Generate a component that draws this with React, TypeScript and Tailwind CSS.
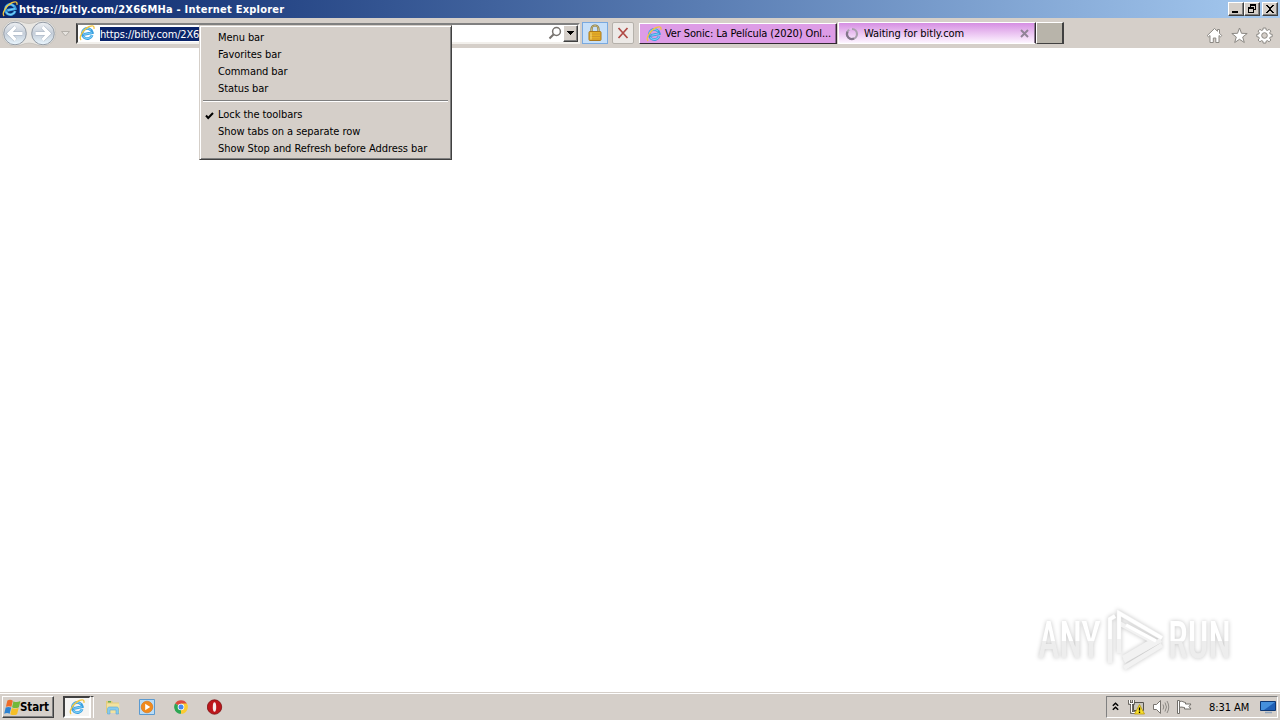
import type { ReactNode } from "react";
import clsx from "clsx";

const topItems = ["Menu bar", "Favorites bar", "Command bar", "Status bar"];

const bottomItems = [
  { label: "Lock the toolbars", checked: true },
  { label: "Show tabs on a separate row", checked: false },
  { label: "Show Stop and Refresh before Address bar", checked: false },
];

function IeIcon({ className }: { className?: string }) {
  return (
    <svg viewBox="0 0 16 16" className={clsx("shrink-0", className)}>
      <g transform="rotate(-12 8 8)">
        <path
          d="M12.6 11.2A5.100 5.100 0 1 1 13.300 8.700H5"
          fill="none"
          stroke="#3a9fe0"
          strokeWidth="2.700"
        />
        <path
          d="M12.600 11.200A5.100 5.100 0 0 1 3.600 10.500M3.500 6.700a5 5 0 0 1 8.900-.7M5.500 8.700h7.500"
          fill="none"
          stroke="#7ed2f8"
          strokeWidth="1"
        />
      </g>
      <path
        d="M2.200 14.800C-.8 13.300 3.800 4.600 10 1.700 13.600 0 15.600.8 14.900 3.800"
        fill="none"
        stroke="#f3c53c"
        strokeWidth="1.300"
      />
    </svg>
  );
}

function CaptionButton({ children }: { children: ReactNode }) {
  return (
    <button className="flex h-[14px] w-4 items-center justify-center border border-t-white border-r-[#404040] border-b-[#404040] border-l-white bg-[#d5cfc9] shadow-[inset_-1px_-1px_0_#808080]">
      <svg
        width="12"
        height="12"
        viewBox="0 0 12 12"
        shapeRendering="crispEdges"
        className="shrink-0"
      >
        {children}
      </svg>
    </button>
  );
}

function TitleBar() {
  return (
    <header className="flex h-[18px] items-center bg-linear-to-r from-[#0a246a] to-[#a6caf0] pr-[2px] pl-[2px]">
      <IeIcon className="size-4" />
      <h1 className="ml-px flex-1 pt-px text-[11px] leading-[17px] font-bold tracking-[0.23px] whitespace-nowrap text-white">
        https://bitly.com/2X66MHa - Internet Explorer
      </h1>
      <div className="flex">
        <CaptionButton>
          <path d="M2 8h6v2H2z" />
        </CaptionButton>
        <CaptionButton>
          <path d="M4 1h6v6H8V6h1V3H5v1H4zM2 4h6v6H2zM3 6v3h4V6z" fillRule="evenodd" />
        </CaptionButton>
        <div className="w-[2px]" />
        <CaptionButton>
          <path d="M2 2h2v1h1v1h2V3h1V2h2v1H9v1H8v1H7v2h1v1h1v1h1v1H8V9H7V8H5v1H4v1H2V9h1V8h1V7h1V5H4V4H3V3H2z" />
        </CaptionButton>
      </div>
    </header>
  );
}

function NavButtons() {
  return (
    <svg width="72" height="30" viewBox="0 0 72 30" className="shrink-0">
      <defs>
        <linearGradient id="nav" x1="0" y1="0" x2="0" y2="1">
          <stop offset="0" stopColor="#eef0f3" />
          <stop offset=".5" stopColor="#c5ced9" />
          <stop offset="1" stopColor="#eaf7ff" />
        </linearGradient>
      </defs>
      <path
        d="M15 2.500c6 0 8 3 14 3s8-3 14-3a12.800 12.800 0 0 1 0 25.600c-6 0-8-3-14-3s-8 3-14 3A12.800 12.800 0 0 1 15 2.500z"
        fill="#e8e6e2"
        stroke="#c3bfb9"
        strokeWidth=".8"
      />
      <circle cx="15" cy="15.500" r="11.300" fill="url(#nav)" stroke="#939ba5" />
      <circle cx="43" cy="15.500" r="11.300" fill="url(#nav)" stroke="#939ba5" />
      <path
        d="M22.500 15.500H9M15.500 9l-6.500 6.500 6.500 6.500M35.500 15.500H49M42.500 9l6.500 6.500-6.500 6.500"
        fill="none"
        stroke="#a5b2c1"
        strokeWidth="4.200"
      />
      <path
        d="M22.500 15.500H9M15.500 9l-6.500 6.500 6.500 6.500M35.500 15.500H49M42.500 9l6.500 6.500-6.500 6.500"
        fill="none"
        stroke="#fff"
        strokeWidth="3.200"
      />
      <path d="M61.500 13.500h8l-4 4.500z" fill="#e6e3df" stroke="#b3afa9" />
    </svg>
  );
}

function AddressBar() {
  return (
    <div className="ml-1 flex h-[21px] w-[504px] shrink-0 items-center border-2 border-t-[#808080] border-r-[#f2f0ec] border-b-[#f2f0ec] border-l-[#404040] bg-white">
      <IeIcon className="ml-px size-4" />
      <div className="ml-[5px] flex-1">
        <span className="inline-block h-[14px] bg-[#0a246a] pt-px align-middle text-[11px] leading-[13px] tracking-[-0.15px] whitespace-nowrap text-white">
          https://bitly.com/2X66MHa
        </span>
      </div>
      <svg width="14" height="14" viewBox="0 0 14 14" className="mr-px">
        <circle cx="8.500" cy="5.500" r="3.900" fill="none" stroke="#77736f" strokeWidth="1.500" />
        <path d="M5.700 8.300 1.500 12.500" stroke="#77736f" strokeWidth="2" />
      </svg>
      <button className="flex h-[17px] w-[15px] items-center justify-center border border-t-white border-r-[#404040] border-b-[#404040] border-l-white bg-[#d5cfc9] shadow-[inset_-1px_-1px_0_#808080]">
        <svg width="7" height="4" viewBox="0 0 7 4" shapeRendering="crispEdges">
          <path d="M0 0h7v1H6v1H5v1H4v1H3V3H2V2H1V1H0z" />
        </svg>
      </button>
    </div>
  );
}

function LockIcon() {
  return (
    <svg width="16" height="18" viewBox="0 0 16 18">
      <path d="M4.500 9V5a3.500 3.500 0 0 1 7 0v4" fill="none" stroke="#86763f" strokeWidth="2.200" />
      <path d="M4.500 9V5a3.500 3.500 0 0 1 7 0v4" fill="none" stroke="#d9c988" strokeWidth=".8" />
      <rect x="2" y="7.500" width="12" height="9" rx="1" fill="#e5ae24" stroke="#a9771c" />
      <path d="M3 10h10M3 12.500h10M3 15h10" stroke="#d0962a" />
      <path d="M4 8.500v7" stroke="#f7dc7c" />
    </svg>
  );
}

function Tabs() {
  return (
    <div className="ml-[5px] flex h-[22px] shrink-0 items-stretch">
      <div className="mt-px flex h-[21px] w-[198px] items-center border border-t-white border-r-[#302830] border-b-[#302830] border-l-white bg-[#dd9ce6] pl-[6px] shadow-[inset_-1px_0_0_#8f6a95]">
        <IeIcon className="size-4" />
        <span className="ml-[3px] pt-px text-[11px] leading-4 tracking-[-0.12px] whitespace-nowrap">
          Ver Sonic: La Película (2020) Onl...
        </span>
      </div>
      <div className="ml-px flex w-[198px] items-center border border-t-white border-r-[#302830] border-b-white border-l-white bg-linear-to-b from-[#d58ee2] to-[#fdf5ff] pt-px pl-[6px] shadow-[inset_-1px_0_0_#8f7a93]">
        <svg width="14" height="14" viewBox="0 0 14 14">
          <circle cx="7" cy="7" r="5" fill="none" stroke="#a9a0ae" strokeWidth="2.200" />
          <path d="M2.500 4.800A5 5 0 0 0 9 11.600" fill="none" stroke="#82748a" strokeWidth="2.200" />
          <path d="M4.300 2.800A5 5 0 0 1 7 2" fill="none" stroke="#e5b9ef" strokeWidth="2.400" />
        </svg>
        <span className="ml-[5px] flex-1 pt-px text-[11px] leading-4 tracking-[-0.05px] whitespace-nowrap">
          Waiting for bitly.com
        </span>
        <svg width="9" height="9" viewBox="0 0 9 9" className="mr-[6px]">
          <path d="m1 1 7 7M8 1 1 8" stroke="#918397" strokeWidth="2" />
        </svg>
      </div>
      <div className="h-[22px] w-[28px] border border-t-white border-r-2 border-r-[#404040] border-b-[#404040] border-l-white bg-[#b8b4aa]" />
    </div>
  );
}

function ToolIcons() {
  return (
    <div className="mt-[4px] mr-[7px] ml-auto flex items-center gap-2">
      <svg width="17" height="17" viewBox="0 0 17 17" fill="#fff" stroke="#8b8883">
        <path d="M8.500 1.500 1.200 8.600l1.300 1.200L4 8.500v7h3.300V11h2.500v4.500H13v-7l1.500 1.300 1.300-1.200-2.300-2.300V2.500h-2v1.800z" />
      </svg>
      <svg width="17" height="17" viewBox="0 0 17 17" fill="#fff" stroke="#8b8883">
        <path d="m8.500 1 2 5.300 5.700.2-4.500 3.500 1.600 5.500-4.800-3.200-4.800 3.200L5.300 10 .8 6.500l5.700-.2z" />
      </svg>
      <svg width="17" height="17" viewBox="0 0 17 17" fill="#fff" stroke="#8b8883">
        <path
          fillRule="evenodd"
          d="M7.200 1h2.600l.4 2 1.200.5 1.700-1.200 1.800 1.800-1.200 1.700.5 1.200 2 .4v2.300l-2 .4-.5 1.200 1.200 1.700-1.800 1.800-1.700-1.200-1.200.5-.4 2H7.200l-.4-2-1.200-.5-1.700 1.200L2.100 13l1.200-1.700-.5-1.200-2-.4V7.400l2-.4.500-1.200-1.200-1.700 1.800-1.800 1.700 1.200L6.800 3zM8.500 5.700a2.800 2.800 0 1 0 0 5.600 2.800 2.800 0 0 0 0-5.600z"
        />
      </svg>
    </div>
  );
}

function Toolbar() {
  return (
    <div className="flex h-[30px] items-center bg-[#d5cfc9]">
      <NavButtons />
      <AddressBar />
      <button className="ml-[2px] flex h-[22px] w-[26px] shrink-0 items-center justify-center border border-[#79a9df] bg-[#c6dff8]">
        <LockIcon />
      </button>
      <button className="ml-1 flex h-[22px] w-[22px] shrink-0 items-center justify-center rounded-[2px] border border-[#b5b1ab] bg-[#ece9e6]">
        <svg width="12" height="12" viewBox="0 0 12 12">
          <path d="m1.500 1 9 10M10.500 1l-9 10" stroke="#b04a45" strokeWidth="1.700" />
        </svg>
      </button>
      <Tabs />
      <ToolIcons />
    </div>
  );
}

function ContextMenu() {
  return (
    <div className="absolute top-[25px] left-[199px] h-[135px] w-[253px] border border-t-[#d5cfc9] border-r-[#404040] border-b-[#404040] border-l-[#d5cfc9] bg-[#d5cfc9] px-[2px] pt-[3px] text-[11px] leading-[17px] shadow-[inset_1px_1px_0_#fff,inset_-1px_-1px_0_#808080]">
      {topItems.map((label) => (
        <div key={label} className="h-[17px] pl-4 tracking-[-0.08px] whitespace-nowrap">
          {label}
        </div>
      ))}
      <div className="mx-px mt-[3px] mb-1 h-[2px] border-t border-b border-t-[#808080] border-b-white" />
      {bottomItems.map(({ label, checked }) => (
        <div key={label} className="flex h-[17px] items-center tracking-[-0.06px] whitespace-nowrap">
          <span className="w-4 pl-[3px]">
            {checked && (
              <svg width="9" height="9" viewBox="0 0 9 9" className="mt-px">
                <path d="M1 4.500 3.200 7 8 2" fill="none" stroke="#000" strokeWidth="2" />
              </svg>
            )}
          </span>
          {label}
        </div>
      ))}
    </div>
  );
}

function Watermark() {
  const word =
    "absolute top-[12px] origin-left scale-x-[0.7] bg-linear-to-b from-white from-50% to-[#ededed] to-50% bg-clip-text font-[Roboto] text-[52px] leading-[40px] font-medium text-transparent";
  return (
    <div className="absolute top-[609px] left-[1038px] h-[62px] w-[196px] drop-shadow-[0_0_2px_#c4c4c4]">
      <span className={clsx(word, "left-0")}>ANY</span>
      <svg width="60" height="62" viewBox="0 0 60 62" className="absolute left-[68px]">
        <path
          d="M4 54V10l5-3M13 44V4l43 25M18 52l37-21M18 59l38-23M13 43V14l33 18-29 17"
          fill="none"
          stroke="#f2f2f2"
          strokeWidth="4.500"
        />
        <path d="M4 30V10l5-3M13 30V4l43 25M20 16l30 16" fill="none" stroke="#fff" strokeWidth="3.500" />
      </svg>
      <span className={clsx(word, "left-[130px]")}>RUN</span>
    </div>
  );
}

function WindowsFlag() {
  return (
    <svg width="17" height="17" viewBox="0 0 16 16" className="shrink-0">
      <path d="M3.200 1.500C5 .4 6.900.7 8.300 1.600L7 7.400C5.400 6.500 3.700 6.500 1.800 7.400z" fill="#ee6b28" />
      <path d="M8.900 2c1.800 1.100 3.900 1.100 6.600-.1L14 7.700c-2.200 1.100-4.500 1.100-6.400 0z" fill="#72b83a" />
      <path d="M1.600 8.100c1.800-.9 3.500-.9 5.200 0L5.300 13.900c-1.600-.9-3.200-.9-5.100 0z" fill="#2d82d1" />
      <path d="M7.400 8.400c1.900 1 4 1 6.400 0L12.300 14.300c-2.200 1.100-4.400 1.100-6.400 0z" fill="#f6bf25" />
    </svg>
  );
}

function ExplorerIcon() {
  return (
    <svg width="16" height="16" viewBox="0 0 16 16">
      <path d="M1 2h6l1 1.500h6V14H1z" fill="#e3cc7c" />
      <path d="M2 4.500h12l1 9.500H2z" fill="#f3e29f" />
      <path d="M3 2.800h3" stroke="#4aa64a" strokeWidth="1.200" />
      <path
        d="M2.500 15V9.800C2.500 8.500 3.500 8 4.500 8h7c1.200 0 2 .6 2 1.800V15H11v-4H5v4z"
        fill="#86cbee"
        stroke="#5fa9d3"
        strokeWidth=".6"
      />
    </svg>
  );
}

function PlayerIcon() {
  return (
    <svg width="16" height="16" viewBox="0 0 16 16">
      <path d="M.5.5h15v15H.5z" fill="#b9dcf6" stroke="#5b9ad0" />
      <circle cx="8" cy="8" r="5.800" fill="#f18a1c" stroke="#d86e0b" strokeWidth=".6" />
      <path d="m6.200 4.800 5 3.200-5 3.200z" fill="#fff" />
    </svg>
  );
}

function ChromeIcon() {
  return (
    <svg width="16" height="16" viewBox="0 0 16 16">
      <path d="M8 8 2.100 4.600A6.800 6.800 0 0 1 13.900 4.600z" fill="#dd4b3e" />
      <path d="M8 8 2.100 4.600A6.800 6.800 0 0 0 8 14.800z" fill="#2da653" />
      <path d="M8 8v6.800a6.800 6.800 0 0 0 5.900-10.200H8z" fill="#fbcb32" />
      <circle cx="8" cy="8" r="3.300" fill="#fff" />
      <circle cx="8" cy="8" r="2.500" fill="#4688ee" />
    </svg>
  );
}

function OperaIcon() {
  return (
    <svg width="16" height="16" viewBox="0 0 16 16">
      <circle cx="7.500" cy="8" r="7.200" fill="#bd171c" stroke="#7c0b0e" strokeWidth=".8" />
      <ellipse cx="7.500" cy="8" rx="1.700" ry="4.800" fill="#f6eeee" />
    </svg>
  );
}

function TrayArea() {
  return (
    <div className="mr-[2px] ml-auto flex h-[22px] w-[172px] items-center border border-t-[#808080] border-r-white border-b-white border-l-[#808080] pl-[5px]">
      <svg width="7" height="9" viewBox="0 0 7 9" className="mb-[2px]">
        <path
          d="m.8 3.700 2.700-2.500 2.700 2.500M.8 7.700l2.700-2.500 2.700 2.500"
          fill="none"
          stroke="#000"
          strokeWidth="1.500"
        />
      </svg>
      <svg width="17" height="16" viewBox="0 0 17 16" className="ml-[9px]">
        <path d="M5.500 3.500h10v8h-10z" fill="#c9c6be" stroke="#55524d" />
        <path d="M1.500 1v3.500h4V1M3.500 4.500v9h4" fill="none" stroke="#55524d" strokeWidth="2.600" />
        <path d="M1.500 1v3.500h4V1M3.500 4.500v9h4" fill="none" stroke="#fff" strokeWidth="1" />
        <path d="m11.500 5.500 5 9.500h-10z" fill="#f8df29" stroke="#b89512" strokeWidth=".8" />
        <path d="M11.500 8.500v3M11.500 12.500v1.500" stroke="#000" strokeWidth="1.300" />
      </svg>
      <svg width="18" height="16" viewBox="0 0 18 16" className="ml-[7px]">
        <path d="M1.500 5.500h3l4-4v13l-4-4h-3z" fill="#fff" stroke="#77736e" />
        <path d="M11 5.500q1.500 2.500 0 5M13 3.500q3 4.500 0 9M15 2q3.500 6 0 12" fill="none" stroke="#8c8984" />
      </svg>
      <svg width="17" height="16" viewBox="0 0 17 16" className="ml-[6px]">
        <path d="M1.500 1.500h2v13h-2z" fill="#fff" stroke="#716e69" />
        <path
          d="M3.500 2.500c3-1 4 1 6 1v1.500h5.500l-2 2.500 2 2.500H8.500V8.500c-2 0-3-1-5 0z"
          fill="#fff"
          stroke="#716e69"
        />
      </svg>
      <span className="ml-[16px] pt-px text-[11px] leading-4 tracking-[-0.05px] whitespace-nowrap">
        8:31 AM
      </span>
      <svg width="16" height="14" viewBox="0 0 16 14" className="mr-px ml-auto">
        <path d="M.5 1.500h15v9H.5z" fill="#1f5fb5" stroke="#0d3773" />
        <path d="M1 2h14L4 10H1z" fill="#4590dc" />
        <path d="M5 12.500h7" stroke="#8fa3bb" strokeWidth="1.500" />
      </svg>
    </div>
  );
}

function Taskbar() {
  return (
    <footer className="flex h-[28px] items-center border-t border-[#d5cfc9] bg-[#d5cfc9] pt-px pl-[2px] shadow-[inset_0_1px_0_#fff]">
      <button className="flex h-[22px] w-[52px] items-center border border-t-white border-r-[#404040] border-b-[#404040] border-l-white pl-px text-[11.500px] font-bold shadow-[inset_-1px_-1px_0_#808080]">
        <WindowsFlag />
        <span className="-ml-px pt-px tracking-[-0.1px]">Start</span>
      </button>
      <div className="ml-[9px] flex h-[22px] w-[28px] items-center justify-center border-2 border-t-[#404040] border-r-white border-b-white border-l-[#404040] bg-[#f5f4f2]">
        <IeIcon className="size-4" />
      </div>
      <div className="h-[22px] w-[3px] border-t border-r border-t-[#404040] border-r-white" />
      <div className="ml-[11px] flex gap-[18px]">
        <ExplorerIcon />
        <PlayerIcon />
        <ChromeIcon />
        <OperaIcon />
      </div>
      <TrayArea />
    </footer>
  );
}

export default function App() {
  return (
    <div className="relative flex h-[720px] w-[1280px] flex-col overflow-hidden bg-white font-['DejaVu_Sans_Condensed','DejaVu_Sans',sans-serif] text-black [font-stretch:condensed]">
      <TitleBar />
      <Toolbar />
      <main className="flex-1" />
      <Watermark />
      <Taskbar />
      <ContextMenu />
    </div>
  );
}
